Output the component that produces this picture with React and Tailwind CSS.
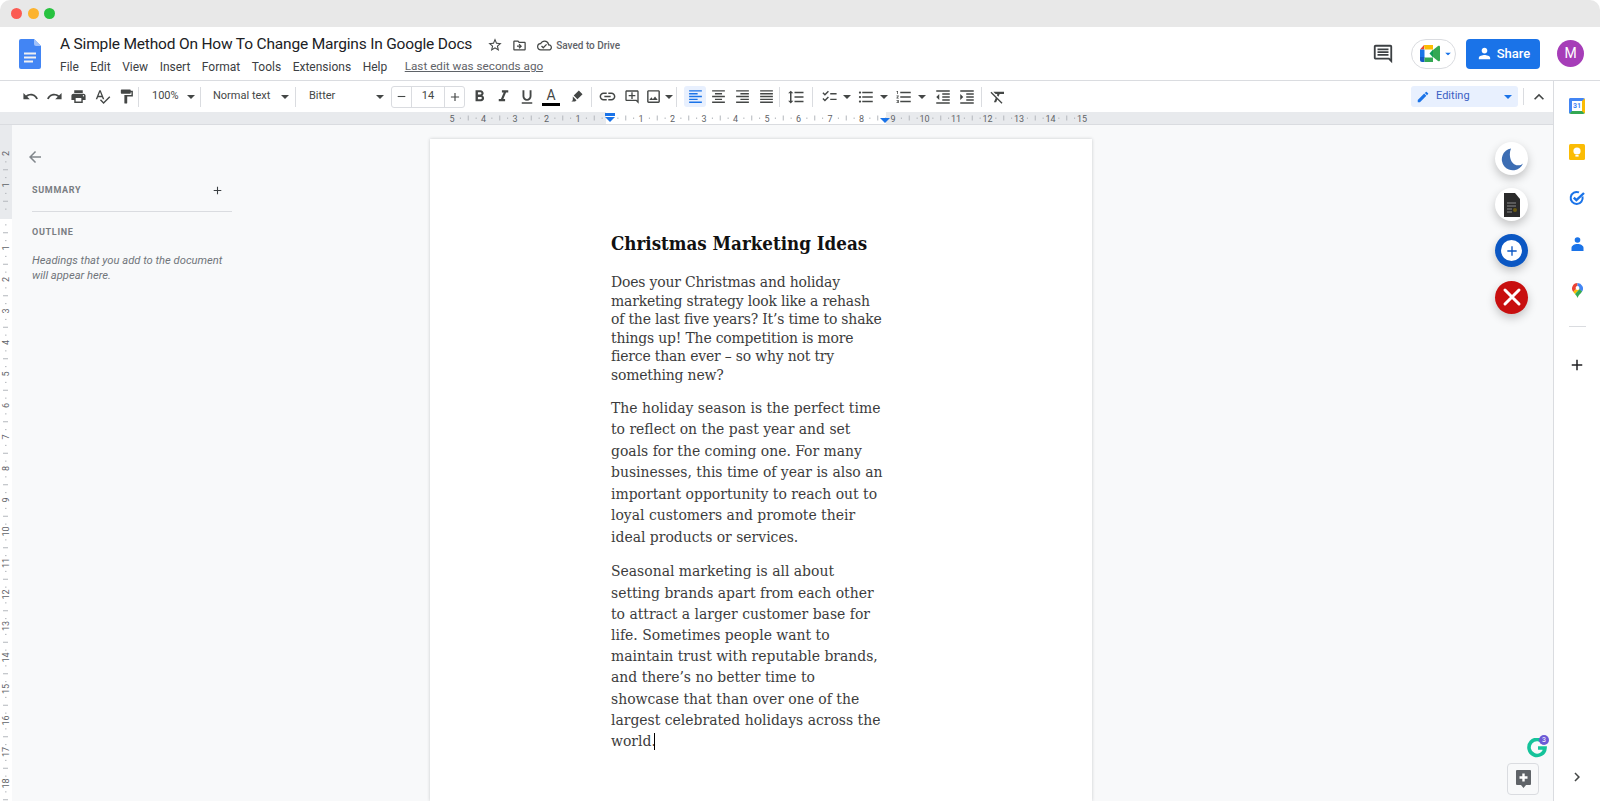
import React from "react";
import {
  MdUndo, MdRedo, MdPrint, MdSpellcheck, MdFormatPaint, MdFormatBold, MdFormatItalic, MdFormatUnderlined,
  MdLink, MdOutlineAddComment, MdOutlineInsertPhoto, MdFormatAlignLeft, MdFormatAlignCenter, MdFormatAlignRight,
  MdFormatAlignJustify, MdFormatLineSpacing, MdChecklist, MdFormatListBulleted, MdFormatListNumbered,
  MdFormatIndentDecrease, MdFormatIndentIncrease, MdFormatClear, MdStarBorder, MdOutlineDriveFileMove,
  MdOutlineCloudDone, MdOutlineComment, MdEdit, MdExpandLess, MdChevronRight, MdAdd, MdArrowBack, MdPerson,
  MdRemove,
} from "react-icons/md";

const Caret = ({ color = "#444746", className = "" }) => (
  <svg width="8" height="4" viewBox="0 0 8 4" className={className}><path d="M0 0h8L4 4z" fill={color} /></svg>
);
const Sep = ({ ml = 0 }) => <div className="w-px h-[20px] bg-[#dadce0] shrink-0" style={ml ? { marginLeft: ml } : undefined} />;
const Tool = ({ icon: Icon, w = 24, size = 17, color = "#444746" }) => (
  <div className="flex items-center justify-center shrink-0" style={{ width: w }}>
    <Icon size={size} color={color} />
  </div>
);

function HRuler() {
  const x0 = 609.5, inch = 31.5;
  const items = [];
  for (let i = -5; i <= 15; i++) {
    const x = x0 + i * inch;
    if (i !== 0) {
      items.push(<text key={"t" + i} x={x} y={9.5} fontSize="9" textAnchor="middle" fill="#5f6368" fontFamily="Roboto">{Math.abs(i)}</text>);
    }
    if (i < 15) {
      items.push(<rect key={"h" + i} x={x + inch / 2} y={3.5} width="1" height="5" fill="#b4b8bd" />);
      items.push(<rect key={"a" + i} x={x + inch / 4} y={5.5} width="1" height="1.5" fill="#b4b8bd" />);
      items.push(<rect key={"b" + i} x={x + (3 * inch) / 4} y={5.5} width="1" height="1.5" fill="#b4b8bd" />);
    }
  }
  return (
    <svg width="1553" height="12" viewBox="0 0 1553 12" className="block">
      <rect x="606" y="0" width="280" height="12" fill="#ffffff" />
      {items}
      <path d="M605 1h10v3h-10z" fill="#1a73e8" />
      <path d="M605 5h10l-5 5z" fill="#1a73e8" />
      <path d="M880 6h10l-5 5z" fill="#1a73e8" />
    </svg>
  );
}

function VRuler() {
  const y0 = 216.5 - 125, inch = 31.5;
  const items = [];
  for (let i = -2; i <= 18; i++) {
    const y = y0 + i * inch;
    if (i !== 0) {
      items.push(<text key={"t" + i} x={0} y={0} fontSize="9" textAnchor="middle" fill="#5f6368" fontFamily="Roboto" transform={`translate(9 ${y}) rotate(-90)`}>{Math.abs(i)}</text>);
    }
    items.push(<rect key={"h" + i} x={3} y={y + inch / 2} width="5" height="1" fill="#b4b8bd" />);
    items.push(<rect key={"a" + i} x={5} y={y + inch / 4} width="1.5" height="1" fill="#b4b8bd" />);
    items.push(<rect key={"b" + i} x={5} y={y + (3 * inch) / 4} width="1.5" height="1" fill="#b4b8bd" />);
  }
  return (
    <svg width="12" height="676" viewBox="0 0 12 676" className="block shrink-0 bg-[#e8eaed]">
      <rect x="0" y={94} width="12" height="582" fill="#ffffff" />
      {items}
    </svg>
  );
}

const DocsLogo = () => (
  <svg width="22" height="30" viewBox="0 0 22 30">
    <path d="M2 0h13l7 7v21a2 2 0 0 1-2 2H2a2 2 0 0 1-2-2V2a2 2 0 0 1 2-2z" fill="#4285f4" />
    <path d="M15 0l7 7h-5a2 2 0 0 1-2-2z" fill="#a1c2fa" />
    <path d="M5 13.5h12v2H5zM5 17.5h12v2H5zM5 21.5h9v2H5z" fill="#f1f1f1" />
  </svg>
);

const MeetLogo = () => (
  <svg width="21" height="17" viewBox="0 0 21 17">
    <path d="M4 0h9v4.500H4.500V4z" fill="#fbbc04" />
    <path d="M4 0v4.500H0z" fill="#ea4335" />
    <path d="M0 4.500h4.500v8H0z" fill="#1a73e8" />
    <path d="M0 12h4.500v5H2a2 2 0 0 1-2-2z" fill="#1558c6" />
    <path d="M4.500 12.500H13V17H4.500z" fill="#34a853" />
    <path d="M13 4.500v8L9.500 8.500z" fill="#0f9d58" />
    <path d="M13 5l5-4c1-.7 2-.2 2 1v13c0 1.200-1 1.700-2 1l-5-4z" fill="#34a853" />
  </svg>
);

const CalendarIcon = () => (
  <div className="relative w-[16px] h-[16px] shrink-0">
    <div className="w-full h-full rounded-[2px] border-t-[3px] border-l-[3px] border-t-[#4285f4] border-l-[#4285f4] border-r-[3px] border-r-[#fbbc04] border-b-[3px] border-b-[#34a853] bg-white flex items-center justify-center">
      <span className="text-[7px] leading-none font-bold text-[#4285f4]">31</span>
    </div>
  </div>
);
const KeepIcon = () => (
  <svg width="16" height="16" viewBox="0 0 16 16">
    <rect width="16" height="16" rx="1.500" fill="#fbbc04" />
    <circle cx="8" cy="7" r="3.600" fill="#fff" />
    <rect x="6.400" y="11" width="3.200" height="1.600" fill="#fff" />
  </svg>
);
const TasksIcon = () => (
  <svg width="16" height="16" viewBox="0 0 16 16">
    <path d="M13.500 6.500A6 6 0 1 1 10 2.400" fill="none" stroke="#1a73e8" strokeWidth="2" />
    <path d="M4.800 7.600l2.600 2.600L15 3" fill="none" stroke="#1a73e8" strokeWidth="2.400" />
  </svg>
);
const ContactsIcon = () => (
  <svg width="13" height="14" viewBox="0 0 13 14">
    <circle cx="6.500" cy="3" r="2.800" fill="#1a73e8" />
    <path d="M0.500 11c0-2.500 3-4 6-4s6 1.500 6 4v3h-12z" fill="#1a73e8" />
  </svg>
);
const MapsIcon = () => (
  <svg width="11" height="15" viewBox="0 0 11 15">
    <path d="M5.500 0A5.500 5.500 0 0 0 1.300 9L5.500 4.500 5.500 0z" fill="#ea4335" />
    <path d="M5.500 0a5.500 5.500 0 0 1 4.600 8.500L5.500 4.500z" fill="#4285f4" />
    <path d="M1.300 9L5.500 4.500 7.500 6 3 11z" fill="#fbbc04" />
    <path d="M10.100 8.500C8.500 11 6.500 12 5.500 15 5 13 4 12.300 3 11l4.500-5z" fill="#34a853" />
    <circle cx="5.500" cy="5" r="1.900" fill="#fff" />
  </svg>
);

const Fab = ({ className = "", children }) => (
  <div className={"w-[33px] h-[33px] rounded-full flex items-center justify-center shadow-[0_4px_10px_rgba(0,0,0,0.22)] " + className}>{children}</div>
);

export default function App() {
  return (
    <div className="w-[1600px] h-[801px] overflow-hidden flex flex-col bg-white text-[#3c4043] font-['Roboto',sans-serif]">
      <div className="h-[27px] shrink-0 bg-[#e8e8e8] rounded-t-[10px] flex items-center pl-[11px] gap-[5.5px]">
        <span className="w-[11px] h-[11px] rounded-full bg-[#fb5b53]" />
        <span className="w-[11px] h-[11px] rounded-full bg-[#fcb32e]" />
        <span className="w-[11px] h-[11px] rounded-full bg-[#27c23f]" />
      </div>

      <header className="h-[54px] shrink-0 flex items-center border-b border-[#dadce0] pl-[19px]">
        <DocsLogo />
        <div className="ml-[19px] mt-[3px] flex flex-col">
          <div className="flex items-center h-[24px]">
            <span className="text-[15.5px] text-[#202124] leading-none tracking-[-0.18px]">A Simple Method On How To Change Margins In Google Docs</span>
            <MdStarBorder size={16} color="#444746" className="ml-[15px]" />
            <MdOutlineDriveFileMove size={15} color="#444746" className="ml-[9px]" />
            <MdOutlineCloudDone size={15} color="#444746" className="ml-[10px]" />
            <span className="ml-[4px] text-[10px] font-medium text-[#5f6368]">Saved to Drive</span>
          </div>
          <div className="flex items-center h-[20px] text-[12px] text-[#3c4043] gap-[11.5px]">
            <span>File</span><span>Edit</span><span>View</span><span>Insert</span><span>Format</span><span>Tools</span><span>Extensions</span><span>Help</span>
            <span className="ml-[6px] text-[11.7px] underline text-[#5f6368]">Last edit was seconds ago</span>
          </div>
        </div>
        <div className="ml-auto flex items-center pr-[16px]">
          <MdOutlineComment size={22} color="#3c4043" />
          <div className="ml-[17px] w-[45px] h-[30px] rounded-full border border-[#dadce0] flex items-center pl-[8px] gap-[3px]">
            <MeetLogo />
            <Caret color="#1a73e8" className="scale-75" />
          </div>
          <div className="ml-[10px] w-[74px] h-[30px] rounded-[4px] bg-[#1a73e8] flex items-center justify-center gap-[4px] text-white text-[13px] font-medium">
            <MdPerson size={17} color="#fff" />
            <span>Share</span>
          </div>
          <div className="ml-[17px] w-[27px] h-[27px] rounded-full bg-[#a63db8] flex items-center justify-center text-white text-[14px]">M</div>
        </div>
      </header>

      <div className="flex-1 min-h-0 flex">
        <div className="flex-1 min-w-0 flex flex-col">
          <div className="h-[31px] shrink-0 flex items-center pl-[18px] text-[11px] text-[#444746]">
            <Tool icon={MdUndo} /><Tool icon={MdRedo} /><Tool icon={MdPrint} /><Tool icon={MdSpellcheck} /><Tool icon={MdFormatPaint} />
            <Sep />
            <div className="w-[61px] shrink-0 flex items-center pl-[13px]"><span className="w-[35px]">100%</span><Caret /></div>
            <Sep />
            <div className="w-[94px] shrink-0 flex items-center pl-[12px]"><span className="w-[68px]">Normal text</span><Caret /></div>
            <Sep />
            <div className="w-[95px] shrink-0 flex items-center pl-[13px]"><span className="w-[67px]">Bitter</span><Caret /></div>
            <div className="w-[74px] h-[22px] shrink-0 border border-[#dadce0] rounded-[3px] flex items-center">
              <div className="w-[20px] h-full flex items-center justify-center border-r border-[#dadce0]"><MdRemove size={13} color="#444746" /></div>
              <div className="flex-1 text-center">14</div>
              <div className="w-[20px] h-full flex items-center justify-center border-l border-[#dadce0]"><MdAdd size={14} color="#444746" /></div>
            </div>
            <div className="w-[2px] shrink-0" />
            <Tool icon={MdFormatBold} size={19} /><Tool icon={MdFormatItalic} size={19} /><Tool icon={MdFormatUnderlined} size={18} />
            <div className="w-[24px] shrink-0 flex flex-col items-center">
              <span className="text-[14px] leading-[14px] text-[#444746]">A</span>
              <span className="w-[18px] h-[3px] bg-black mt-[1px]" />
            </div>
            <div className="w-[26px] shrink-0 flex items-center justify-center">
              <svg width="13" height="13" viewBox="0 0 14 14"><path d="M9.500.5l4 4-5.500 5.500-4-4zM3 7l4 4-1.500 1.500H1.500L3 11z" fill="#444746" /></svg>
            </div>
            <Sep ml={2} />
            <Tool icon={MdLink} size={19} w={31} />
            <Tool icon={MdOutlineAddComment} w={17} size={16} />
            <div className="w-[36px] shrink-0 flex items-center pl-[5px] gap-[3px]">
              <MdOutlineInsertPhoto size={17} color="#444746" /><Caret />
            </div>
            <Sep />
            <div className="ml-[7px] w-[22px] h-[21px] shrink-0 rounded-[3px] bg-[#e8f0fe] flex items-center justify-center"><MdFormatAlignLeft size={17} color="#1a73e8" /></div>
            <Tool icon={MdFormatAlignCenter} /><Tool icon={MdFormatAlignRight} /><Tool icon={MdFormatAlignJustify} />
            <Sep ml={1} />
            <Tool icon={MdFormatLineSpacing} w={32} size={18} />
            <Sep />
            <div className="w-[42px] shrink-0 flex items-center pl-[8px] gap-[5px]"><MdChecklist size={17} color="#444746" /><Caret /></div>
            <div className="w-[38px] shrink-0 flex items-center gap-[5px] pl-[2px]"><MdFormatListBulleted size={18} color="#444746" /><Caret /></div>
            <div className="w-[38px] shrink-0 flex items-center gap-[5px] pl-[2px]"><MdFormatListNumbered size={18} color="#444746" /><Caret /></div>
            <Tool icon={MdFormatIndentDecrease} size={18} /><Tool icon={MdFormatIndentIncrease} size={18} />
            <Sep ml={2} />
            <Tool icon={MdFormatClear} w={32} size={18} />
            <div className="ml-auto w-[107px] h-[21px] shrink-0 rounded-[3px] bg-[#e8f0fe] flex items-center pl-[5px] pr-[4px] text-[#1a73e8]">
              <MdEdit size={14} color="#1a73e8" />
              <span className="ml-[6px] text-[#3b5fc4]">Editing</span>
              <Caret color="#1a73e8" className="ml-auto mr-[2px]" />
            </div>
            <div className="ml-[5px] w-px h-[17px] bg-[#dadce0] shrink-0" />
            <div className="w-[29px] shrink-0 flex items-center justify-center"><MdExpandLess size={20} color="#444746" /></div>
          </div>
          <div className="h-[13px] shrink-0 bg-[#e8eaed] border-b border-[#dadce0] overflow-hidden"><HRuler /></div>
          <div className="flex-1 min-h-0 flex bg-[#f8f9fa] overflow-hidden">
            <VRuler />
            <aside className="w-[418px] shrink-0 pl-[20px] pt-[23px]">
              <MdArrowBack size={18} color="#80868b" className="-ml-[6px]" />
              <div className="w-[200px] h-[29px] mt-[17px] border-b border-[#dadce0] flex items-start justify-between">
                <span className="text-[9px] font-bold tracking-[0.7px] text-[#787d82] leading-[14px]">SUMMARY</span>
                <MdAdd size={13} color="#3c4043" className="mr-[8px] mt-[1px]" />
              </div>
              <div className="mt-[13px] text-[9px] font-bold tracking-[0.7px] text-[#787d82] leading-[14px]">OUTLINE</div>
              <p className="w-[200px] mt-[15px] text-[11.2px] italic leading-[14.5px] text-[#70757a]">Headings that you add to the document will appear here.</p>
            </aside>
            <main className="w-[662px] shrink-0 mt-[14px] bg-white shadow-[0_0_3px_rgba(60,64,67,0.25)] pl-[181px] pt-[93px] whitespace-nowrap font-['DejaVu_Serif_Condensed','DejaVu_Serif',serif]">
              <h1 className="text-[18.6px] font-bold leading-[24px] text-[#111]">Christmas Marketing Ideas</h1>
              <p className="mt-[17px] text-[15.5px] leading-[18.57px] text-[#3c3c3c] tracking-[-0.18px]">Does your Christmas and holiday<br />marketing strategy look like a rehash<br />of the last five years? It’s time to shake<br />things up! The competition is more<br />fierce than ever – so why not try<br />something new?</p>
              <p className="mt-[13.6px] text-[15.5px] leading-[21.43px] text-[#3c3c3c] tracking-[0px]">The holiday season is the perfect time<br />to reflect on the past year and set<br />goals for the coming one. For many<br />businesses, this time of year is also an<br />important opportunity to reach out to<br />loyal customers and promote their<br />ideal products or services.</p>
              <p className="mt-[13.3px] text-[15.5px] leading-[21.2px] text-[#3c3c3c] tracking-[0px]">Seasonal marketing is all about<br />setting brands apart from each other<br />to attract a larger customer base for<br />life. Sometimes people want to<br />maintain trust with reputable brands,<br />and there’s no better time to<br />showcase that than over one of the<br />largest celebrated holidays across the<br />world.<span className="inline-block w-px h-[17px] -ml-[2px] bg-black align-[-4px]" /></p>
            </main>
            <div className="flex-1 min-w-0 flex flex-col items-end pr-[25px] pt-[17px]">
              <div className="flex flex-col gap-[13.2px]">
                <Fab className="bg-white">
                  <svg width="24" height="24" viewBox="0 0 24 24"><path d="M11 1.500a11 11 0 1 0 12 15c-2 2-5.500 2.500-8.300 1C10.200 15 8.500 7 11 1.500z" fill="#3c6db3" /></svg>
                </Fab>
                <Fab className="bg-white">
                  <svg width="18" height="24" viewBox="0 0 18 24"><path d="M1 0h11l5 6v18H1z" fill="#2b2b2b" /><path d="M4 10h9M4 13h9M4 16h5M4 19h5" stroke="#8a8a8a" strokeWidth="1.200" /><circle cx="12" cy="17" r="2" fill="#6b5a10" /></svg>
                </Fab>
                <Fab className="bg-[#0b57c3]">
                  <div className="w-[21px] h-[21px] rounded-full bg-white flex items-center justify-center"><MdAdd size={16} color="#0b57c3" /></div>
                </Fab>
                <Fab className="bg-[#c80f0f]">
                  <svg width="20" height="20" viewBox="0 0 20 20"><path d="M3 3l14 14M17 3L3 17" stroke="#fff" strokeWidth="3" strokeLinecap="round" /></svg>
                </Fab>
              </div>
              <div className="mt-auto mb-[6px] flex flex-col items-end">
                <div className="relative w-[20px] h-[20px] -mr-[19px]">
                  <svg width="20" height="20" viewBox="0 0 20 20"><path d="M17 5.500A8 8 0 1 0 18 10h-7" fill="none" stroke="#15c39a" strokeWidth="3.600" /></svg>
                  <span className="absolute -top-[3px] -right-[2px] w-[10px] h-[10px] rounded-full bg-[#6c5ad6] text-white text-[7px] flex items-center justify-center">3</span>
                </div>
                <div className="mt-[5px] -mr-[11px] w-[32px] h-[32px] rounded-[4px] border border-[#dadce0] bg-[#f8f9fa] flex items-center justify-center">
                  <svg width="15" height="18" viewBox="0 0 15 18"><path d="M1 0h13a1 1 0 0 1 1 1v13a1 1 0 0 1-1 1h-4l-2.500 3L5 15H1a1 1 0 0 1-1-1V1a1 1 0 0 1 1-1z" fill="#5f6368" /><path d="M7.500 3.500v8M3.500 7.500h8" stroke="#fff" strokeWidth="2.400" /></svg>
                </div>
              </div>
            </div>
          </div>
        </div>
        <aside className="w-[47px] shrink-0 border-l border-[#dadce0] bg-white flex flex-col items-center pt-[17px]">
          <CalendarIcon />
          <div className="mt-[30px]"><KeepIcon /></div>
          <div className="mt-[30px]"><TasksIcon /></div>
          <div className="mt-[31px]"><ContactsIcon /></div>
          <div className="mt-[32px]"><MapsIcon /></div>
          <div className="mt-[28px] w-[17px] h-px bg-[#dadce0]" />
          <MdAdd size={18} color="#202124" className="mt-[29px]" />
          <MdChevronRight size={18} color="#444746" className="mt-auto mb-[15px]" />
        </aside>
      </div>
    </div>
  );
}
